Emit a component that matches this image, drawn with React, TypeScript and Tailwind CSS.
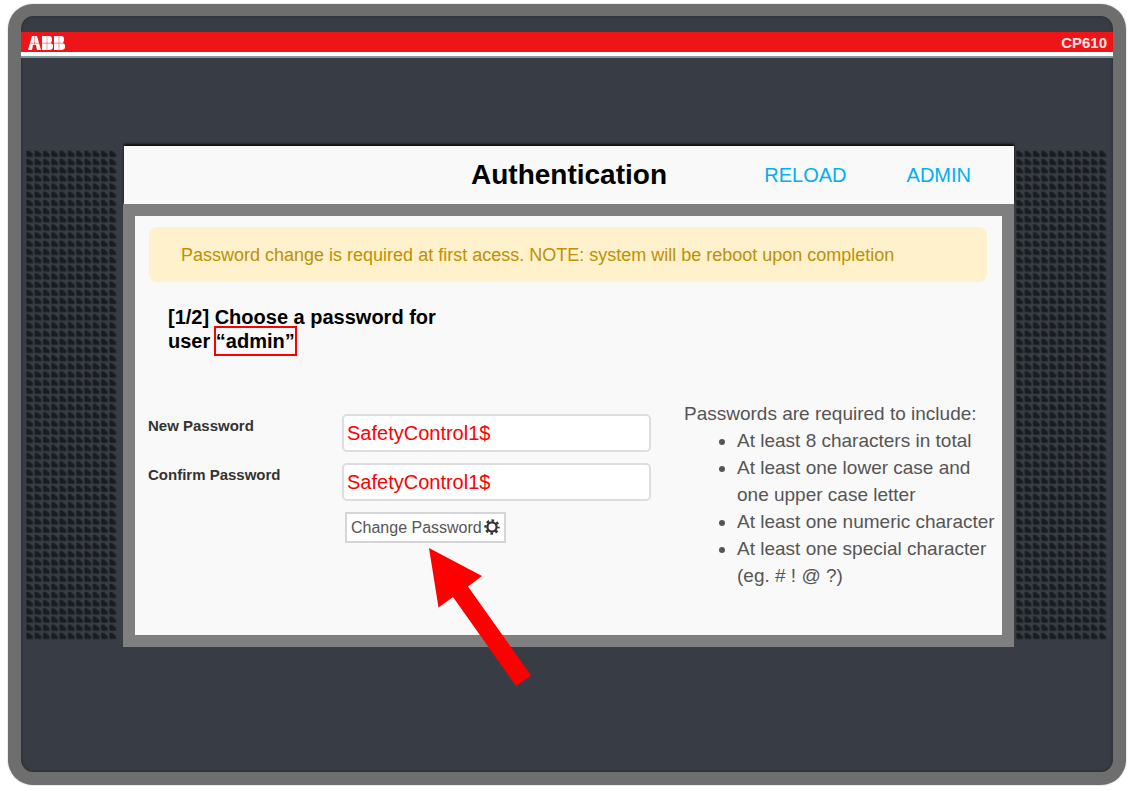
import { useState } from "react";

const RULES = [
    "At least 8 characters in total",
    "At least one lower case and one upper case letter",
    "At least one numeric character",
    "At least one special character (eg. # ! @ ?)",
];

function AbbLogo() {
    return (
        <svg width="37" height="14" viewBox="0 0 37 14" fill="white" role="img" aria-label="ABB">
            <path d="M0 14 L4 0 H6.3 V9 H5 L4 14Z M6.7 0 H9 L13 14 H9 L8 9 H6.7Z" />
            <path d="M14 0 H18.8 V14 H14Z M19.2 0 H21 Q24 0 24 3 V5 L23 6.5 L25 9 V11 Q25 14 21 14 H19.2Z" />
            <path d="M26 0 H30.8 V14 H26Z M31.2 0 H33 Q36 0 36 3 V5 L35 6.5 L37 9 V11 Q37 14 33 14 H31.2Z" />
            <path d="M0 7.2 H37" stroke="#ee1518" strokeWidth="0.5" />
        </svg>
    );
}

function Grille({ id }: { id: string }) {
    return (
        <svg width="91" height="490" className="mt-1 shrink-0" aria-hidden="true">
            <defs>
                <pattern id={id} width="8.3" height="8.17" patternUnits="userSpaceOnUse">
                    <path d="M0.5 0.5 H7.2 V7 H0.5Z" fill="#2a2f35" />
                    <path d="M0.5 1 L2.5 1 L6.8 4.5 L6.8 6.8 L1 6.8 L0.5 6Z" fill="#181b1f" />
                    <path d="M4 0.5 H7.2 V3.5Z" fill="#3a424c" />
                </pattern>
            </defs>
            <rect width="91" height="490" fill={`url(#${id})`} />
        </svg>
    );
}

function GearIcon() {
    return (
        <svg width="16" height="16" viewBox="0 0 16 16" className="mb-0.5" aria-hidden="true">
            <g fill="none" stroke="#333333">
                <circle cx="8" cy="8" r="4.6" strokeWidth="2.3" />
                <circle cx="8" cy="8" r="6.5" strokeWidth="2.4" strokeDasharray="2.6 2.505" strokeDashoffset="1.3" />
            </g>
        </svg>
    );
}

function Arrow() {
    return (
        <svg
            width="102"
            height="138"
            viewBox="0 0 102 138"
            className="pointer-events-none absolute left-[84px] top-9"
            aria-hidden="true"
        >
            <path d="M0 0 L53 28 L39 38.5 L102 127.5 L87 138 L24 49 L9.5 59.5Z" fill="#ff0000" />
        </svg>
    );
}

function PasswordRow({
    id,
    label,
    value,
    onChange,
}: {
    id: string;
    label: string;
    value: string;
    onChange: (value: string) => void;
}) {
    return (
        <>
            <label htmlFor={id} className="text-[15px] font-bold leading-6 text-[#333333]">
                {label}
            </label>
            <input
                id={id}
                name={id}
                type="text"
                value={value}
                onChange={(e) => onChange(e.target.value)}
                className="h-[38px] w-full rounded-[5px] border-2 border-[#dddddd] bg-white px-[3px] text-xl text-[#ff0000] outline-none"
            />
        </>
    );
}

export default function App() {
    const [password, setPassword] = useState("SafetyControl1$");
    const [confirm, setConfirm] = useState("SafetyControl1$");

    return (
        <div className="flex min-h-screen bg-white pb-1.5 pl-2 pr-1.5 pt-1 font-['Liberation_Sans',Arial,sans-serif]">
            <div className="flex flex-1 flex-col rounded-[25px] border-[13px] border-t-12 border-[#6e6e6e] bg-[#383c44] pt-4 shadow-[0_0_2px_#bbbbbb,inset_0_0_3px_#22272b]">
                <header className="flex h-[26px] items-center justify-between border-b-2 border-[#85989d] bg-[#ee1518] shadow-[inset_0_-4px_0_#ffffff]">
                    <div className="mb-0.5 pl-[7px]">
                        <AbbLogo />
                    </div>
                    <span className="mb-0.5 pr-1.5 text-[15px] font-bold leading-5 text-[#ffe4e4]">CP610</span>
                </header>

                <main className="mt-[88px] flex items-start pl-[5px] pr-1.5">
                    <Grille id="grille-left" />

                    <div className="ml-1.5 mr-0.5 min-w-0 flex-1">
                        <div className="ml-px grid h-[58px] grid-cols-[1fr_auto_1fr] items-center bg-[#f9f9f9] shadow-[0_-2px_2px_#0c0d0f]">
                            <h1 className="col-start-2 text-[28px] font-bold leading-8 text-black">Authentication</h1>
                            <nav className="flex justify-end gap-[60px] pr-[43px] text-xl text-[#00b0f0]">
                                <a href="#reload">RELOAD</a>
                                <a href="#admin">ADMIN</a>
                            </nav>
                        </div>

                        <div className="border-12 border-[#7f7f7f] bg-[#f9f9f9] pb-[46px] pt-[11px]">
                            <p
                                role="alert"
                                className="ml-3.5 mr-[15px] rounded-lg bg-[#fff1cc] px-8 pb-3.5 pt-4 text-lg leading-[25px] text-[#bf9000]"
                            >
                                Password change is required at first acess. NOTE: system will be reboot upon completion
                            </p>

                            <h2 className="ml-[33px] mt-[23px] text-xl font-bold leading-6 text-black">
                                [1/2] Choose a password for
                                <br />
                                user <span className="-ml-0.5 border-2 border-[#ff0000] py-0.5">“admin”</span>
                            </h2>

                            <div className="ml-[13px] mt-[47px] grid grid-cols-[1fr_318px] gap-x-[33px]">
                                <form
                                    className="mt-3.5 grid grid-cols-[194px_1fr] content-start gap-y-[11px]"
                                    onSubmit={(e) => e.preventDefault()}
                                >
                                    <PasswordRow
                                        id="new-password"
                                        label="New Password"
                                        value={password}
                                        onChange={setPassword}
                                    />
                                    <PasswordRow
                                        id="confirm-password"
                                        label="Confirm Password"
                                        value={confirm}
                                        onChange={setConfirm}
                                    />
                                    <div className="relative col-start-2 ml-[3px] justify-self-start">
                                        <button
                                            type="submit"
                                            className="flex h-[31px] items-center gap-0.5 border-2 border-[#d5d5d5] bg-white px-1 text-base text-[#555555]"
                                        >
                                            Change Password
                                            <GearIcon />
                                        </button>
                                        <Arrow />
                                    </div>
                                </form>

                                <section className="text-[19px] leading-[27px] text-[#555555]">
                                    <p>Passwords are required to include:</p>
                                    <ul className="list-disc pl-[53px]">
                                        {RULES.map((rule) => (
                                            <li key={rule}>{rule}</li>
                                        ))}
                                    </ul>
                                </section>
                            </div>
                        </div>
                    </div>

                    <Grille id="grille-right" />
                </main>
            </div>
        </div>
    );
}
